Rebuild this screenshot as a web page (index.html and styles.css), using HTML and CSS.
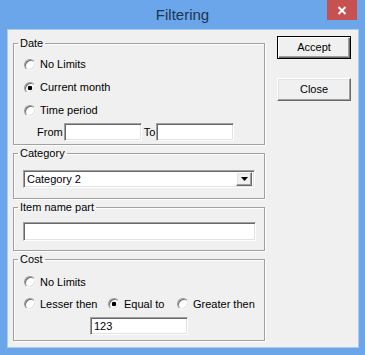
FILE: index.html
```html
<!DOCTYPE html>
<html lang="en">
  <head>
    <meta charset="UTF-8" />
    <title>Filtering</title>
    <link rel="stylesheet" href="styles.css">
  </head>
  <body>
    <div class="window">
      <!-- title bar -->
      <div class="titlebar">
        <span></span>
        <span class="title">Filtering</span>
        <span class="close-btn">
          <svg width="10" height="9" viewBox="0 0 10 9">
            <path d="M1.5 1 L8.5 8 M8.5 1 L1.5 8" stroke="#fff" stroke-width="2" />
          </svg>
        </span>
      </div>

      <div class="client">
        <div class="groups">
          <!-- date -->
          <fieldset class="group group-date">
            <legend>Date</legend>
            <div class="group-body">
              <div class="radio-row"><span class="radio"></span>No Limits</div>
              <div class="radio-row"><span class="radio checked"></span>Current month</div>
              <div class="radio-row"><span class="radio"></span>Time period</div>
              <div class="period-row">
                <span>From</span>
                <input type="text" class="field field-from" />
                <span class="to-label">To</span>
                <input type="text" class="field field-to" />
              </div>
            </div>
          </fieldset>

          <!-- category -->
          <fieldset class="group group-category">
            <legend>Category</legend>
            <div class="group-body">
              <div class="combo">
                <span class="combo-text">Category 2</span>
                <span class="combo-btn">
                  <svg width="7" height="4" viewBox="0 0 7 4"><path d="M0 0 H7 L3.5 4 Z" fill="#000" /></svg>
                </span>
              </div>
            </div>
          </fieldset>

          <!-- item name -->
          <fieldset class="group group-item">
            <legend>Item name part</legend>
            <div class="group-body">
              <input type="text" class="field field-item" />
            </div>
          </fieldset>

          <!-- cost -->
          <fieldset class="group group-cost">
            <legend>Cost</legend>
            <div class="group-body">
              <div class="radio-row"><span class="radio"></span>No Limits</div>
              <div class="cost-row">
                <div class="radio-row"><span class="radio"></span>Lesser then</div>
                <div class="radio-row"><span class="radio checked"></span>Equal to</div>
                <div class="radio-row"><span class="radio"></span>Greater then</div>
              </div>
              <input type="text" class="field field-cost" value="123" />
            </div>
          </fieldset>
        </div>

        <div class="buttons">
          <button class="btn btn-default">Accept</button>
          <button class="btn btn-close">Close</button>
        </div>
      </div>
    </div>
  </body>
</html>
```

FILE: styles.css
```css
/* resets */
* {
  padding: 0;
  margin: 0;
  box-sizing: border-box;
}
body {
  font-family: "Liberation Sans", Arial, sans-serif;
  font-size: 11px;
  line-height: 13px;
  color: #000;
}

/* window frame */
.window {
  width: 365px;
  height: 355px;
  background: #6ba6ea;
  display: flex;
  flex-direction: column;
}

.titlebar {
  height: 30px;
  display: grid;
  grid-template-columns: 1fr auto 1fr;
  align-items: start;
}
.title {
  font-size: 15px;
  line-height: 18px;
  margin-top: 6px;
  color: #1c3554;
}
.close-btn {
  justify-self: end;
  margin-right: 8px;
  width: 30px;
  height: 20px;
  background: #c75050;
  display: flex;
  align-items: center;
  justify-content: center;
}

.client {
  margin: 0 7px 0 8px;
  height: 317px;
  background: #f0f0f0;
  box-shadow: 0 0 0 1px #a9cbf2;
  display: flex;
  padding: 6px 7px 0 5px;
}

.groups {
  width: 252px;
  margin-top: 1px;
}

/* group boxes */
.group {
  width: 100%;
  min-width: 0;
  border: 1px solid #a0a0a0;
  box-shadow: inset 1px 1px 0 #fff, 1px 1px 0 #fff;
  padding: 0;
}
.group + .group {
  margin-top: 2px;
}
.group legend {
  margin-left: 4px;
  padding: 0 2px;
  line-height: 13px;
}

.group-date .group-body {
  padding: 3px 0 3px;
}
.group-category .group-body {
  padding: 10px 0 10px 9px;
}
.group-item .group-body {
  padding: 8px 0 9px 9px;
}
.group-cost .group-body {
  padding: 5px 0 5px;
}

/* radio buttons */
.radio-row {
  display: flex;
  align-items: center;
  height: 23px;
}
.group-cost .radio-row {
  height: 22px;
}
.radio {
  width: 12px;
  height: 12px;
  flex-shrink: 0;
  margin: 0 4px 0 10px;
  border-radius: 50%;
  border: 1px solid;
  border-color: #9a9a9a #f6f6f6 #f6f6f6 #9a9a9a;
  box-shadow: inset 1px 1px 0 #6e6e6e, inset -1px -1px 0 #e0e0e0;
  background: #fff;
}
.radio.checked {
  background: radial-gradient(circle, #000 0 2px, #fff 2.6px);
}

.cost-row {
  display: grid;
  grid-template-columns: 94px 69px auto;
}
.cost-row .radio-row:not(:first-child) .radio {
  margin-left: 0;
}

/* text fields */
.field {
  display: block;
  flex-shrink: 0;
  height: 18px;
  border: 1px solid;
  border-color: #a0a0a0 #fff #fff #a0a0a0;
  box-shadow: inset 1px 1px 0 #696969, inset -1px -1px 0 #e3e3e3;
  background: #fff;
  font: inherit;
  padding: 0 3px;
  outline: none;
}

.period-row {
  display: flex;
  align-items: center;
  margin-top: 1px;
  padding-left: 23px;
}
.field-from {
  width: 78px;
  margin-left: 1px;
}
.to-label {
  margin-left: 2px;
}
.field-to {
  width: 78px;
  margin-left: 1px;
}

.field-item {
  width: 233px;
  height: 19px;
}

.field-cost {
  width: 98px;
  margin: 2px 0 0 76px;
}

/* combo box */
.combo {
  width: 232px;
  height: 18px;
  display: flex;
  align-items: center;
  justify-content: space-between;
  border: 1px solid;
  border-color: #a0a0a0 #fff #fff #a0a0a0;
  box-shadow: inset 1px 1px 0 #696969, inset -1px -1px 0 #e3e3e3;
  background: #fff;
  padding: 0 2px 0 3px;
}
.combo-btn {
  width: 16px;
  height: 14px;
  display: flex;
  align-items: center;
  justify-content: center;
  background: #f0f0f0;
  border: 1px solid;
  border-color: #fff #696969 #696969 #fff;
  box-shadow: inset -1px -1px 0 #a0a0a0, inset 1px 1px 0 #e3e3e3;
}

/* buttons */
.buttons {
  margin-left: 12px;
  width: 74px;
  display: flex;
  flex-direction: column;
}
.btn {
  width: 74px;
  height: 23px;
  font: inherit;
  background: #f0f0f0;
  border: 1px solid;
  border-color: #fff #696969 #696969 #fff;
  box-shadow: inset -1px -1px 0 #a0a0a0, inset 1px 1px 0 #e3e3e3;
}
.btn-default {
  border: 1px solid #000;
  box-shadow: inset 1px 1px 0 #fff, inset -1px -1px 0 #696969, inset -2px -2px 0 #a0a0a0;
}
.btn-close {
  margin-top: 19px;
}
```
